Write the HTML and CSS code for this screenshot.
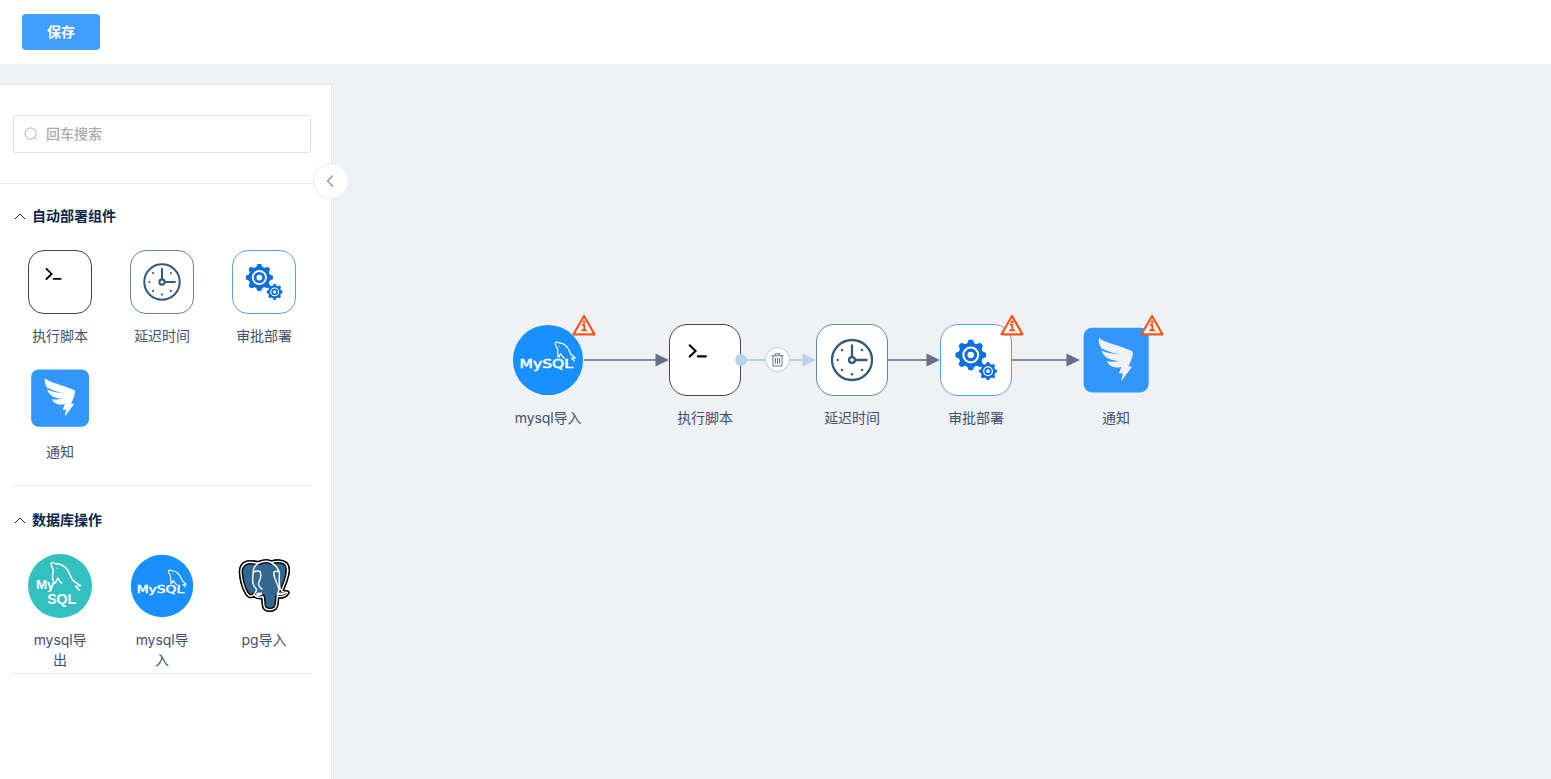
FILE: index.html
```
<!DOCTYPE html>
<html lang="zh-CN">
<head>
<meta charset="utf-8">
<title>流程编排</title>
<link rel="stylesheet" href="styles.css">
</head>
<body>
<svg class="defs" width="0" height="0" aria-hidden="true">
  <symbol id="script" viewBox="0 0 64 64">
    <path d="M18 18.500l5.400 5.200-5.400 5.200M25.500 28.700h7.200" fill="none" stroke="#000" stroke-width="1.900" stroke-linecap="round"/>
  </symbol>
  <symbol id="clock" viewBox="0 0 64 64">
    <g fill="none" stroke="#355a7c" stroke-width="2.100" stroke-linecap="round">
      <circle cx="32" cy="32" r="18.300"/>
      <circle cx="32" cy="32" r="2.700"/>
      <path d="M32 18.600v10.500M35 32h10.300"/>
    </g>
    <g fill="#355a7c">
      <circle cx="19" cy="32" r="1.100"/><circle cx="32" cy="45" r="1.100"/>
      <circle cx="22.800" cy="22.800" r="1.100"/><circle cx="41.200" cy="22.800" r="1.100"/>
      <circle cx="22.800" cy="41.200" r="1.100"/><circle cx="41.200" cy="41.200" r="1.100"/>
    </g>
  </symbol>
  <symbol id="gear" viewBox="-14 -14 28 28">
    <g fill="#0b6fdf">
      <path id="tooth" d="M-4.600-9.300C-2.800-10.500-2.500-12-2-13.400Q0-14.400 2-13.400C2.500-12 2.800-10.500 4.600-9.300z"/>
      <use href="#tooth" transform="rotate(45)"/><use href="#tooth" transform="rotate(90)"/>
      <use href="#tooth" transform="rotate(135)"/><use href="#tooth" transform="rotate(180)"/>
      <use href="#tooth" transform="rotate(225)"/><use href="#tooth" transform="rotate(270)"/>
      <use href="#tooth" transform="rotate(315)"/>
    </g>
    <circle r="9.200" fill="#fff" stroke="#0b6fdf" stroke-width="3.200"/>
    <circle r="4.300" fill="none" stroke="#0b6fdf" stroke-width="2.800"/>
  </symbol>
  <symbol id="gears" viewBox="0 0 64 64">
    <use href="#gear" x="12.900" y="13.100" width="28.600" height="28.600"/>
    <use href="#gear" x="34.600" y="33.800" width="16.800" height="16.800"/>
  </symbol>
  <symbol id="ding" viewBox="0 0 64 64">
    <rect x="3.200" y="3.400" width="57.800" height="57.400" rx="7.500" fill="#3296fa"/>
    <path fill="currentColor" d="M16.900 12.200C21 16.500 37 19.600 45 23.600Q47.800 25 47 27.200C46.400 30.500 44.800 34 43 37.600L46.200 38 36.700 50.800 38 43.800H34.600L36.800 37.900C33 39.200 30 38.600 28.100 37.600 26 36.500 24.500 35 23.900 33.200 27 33.800 31 33.600 34.600 32.800 28 32.800 21.500 30.500 19.100 23.600 24 26 30 26.800 35.500 27.200 28 25.400 22.500 23.500 19.200 21.700 17 19 16.200 15 16.900 12.200z"/>
  </symbol>
  <symbol id="mysql-in" viewBox="0 0 64 64">
    <circle cx="32" cy="32" r="31.200" fill="#1890ff"/>
    <path d="M41 29.500L40.600 24.500C41.500 22 38.500 19.500 38.500 17.500 38.500 15.800 40.200 15.800 41.700 16.800 46.500 16.500 50 21 51.200 24.500 52 27.500 54 28.700 56.300 30.200L53 30.600 55.800 33M41 29.500C41.800 30.600 42.300 27 43.200 26.600 44.300 28.500 45.600 29.500 46.800 31" fill="none" stroke="#fff" stroke-width="1.100" stroke-linejoin="round"/>
    <circle cx="42" cy="19.700" r=".5" fill="#fff"/>
  </symbol>
  <symbol id="mysql-out" viewBox="0 0 64 64">
    <circle cx="32" cy="32" r="32" fill="#33c0c0"/>
    <path d="M26 28C24 25 24.300 21 25.200 17.500 25.700 15 23 12.500 23.100 10 23.200 7.800 26 8.600 27.500 9.800 36 9.500 40.500 16 43 23 44.500 27.500 48.500 28.800 52.600 31.600L47.300 32.200 52 36.700M26 28C27.500 31.500 28.500 26 29.800 24 31 27 32.300 28.400 34.200 29.500" fill="none" stroke="#fff" stroke-width="1.500" stroke-linejoin="round"/>
    <circle cx="29" cy="14" r=".6" fill="#fff"/>
  </symbol>
  <symbol id="pg" viewBox="0 0 64 64">
    <path id="elephant" d="M14 9C18 7 24 9.500 27 9 31 7 36 7 39 8.500 44 7 50 7 53.500 9.500 58 14 55 22 53.500 27 52.500 30.500 50.500 33.500 49.500 37 51.500 38.500 53.500 38.500 55.500 38.500 54 41.500 50 43 45.200 42.500 45 48 45 51.500 43 54 40.500 56.500 34.500 56.500 32.500 53.500 31 50 32 47 31 42.800 28 43.500 24 43.500 22 40.500 19.500 43 17.500 43 15 39.500 11 33 9.500 25 9 19.500 8.500 15 10 11 14 9z" fill="#336791" stroke="#000" stroke-width="4.200" stroke-linejoin="round"/>
    <use href="#elephant" class="elephant-rim"/>
    <path d="M14 9C18 7 24 9.500 27 9 31 7 36 7 39 8.500 44 7 50 7 53.500 9.500 58 14 55 22 53.500 27 52.500 30.500 50.500 33.500 49.500 37 51.500 38.500 53.500 38.500 55.500 38.500 54 41.500 50 43 45.200 42.500 45 48 45 51.500 43 54 40.500 56.500 34.500 56.500 32.500 53.500 31 50 32 47 31 42.800 28 43.500 24 43.500 22 40.500 19.500 43 17.500 43 15 39.500 11 33 9.500 25 9 19.500 8.500 15 10 11 14 9zM27 9C21.500 11.500 21 16 21 21 20.500 26 19.800 30.500 24 34.500 26 36.500 23 38.500 22 40.500M21 18.500Q24.500 16 28 17.500C30.500 22 27.500 26 26.300 30Q27.500 33.500 30.500 35.500M39 8.500C44 11 46.500 15 47.500 19.500 47 27 46.500 31 48.500 36M47 18Q44.500 16.500 41.800 18C41.500 24 45.500 29 47 35L45.200 42.500" fill="none" stroke="#fff" stroke-width="1.400" stroke-linejoin="round"/>
    <path d="M24 39.500Q26.500 38 30 38.500L29.500 41.500 24.500 42zM46 39Q50 38 54 39.500 50.500 41.500 46 41.300z" fill="#fff"/>
  </symbol>
  <symbol id="warn" viewBox="0 0 24 22">
    <path d="M12 2L22.500 20.300H1.500z" fill="#fff" stroke="#fa541c" stroke-width="2.200" stroke-linejoin="round"/>
    <path d="M9.800 10.800h2.500v5.200M9.200 16.200h5.800" fill="none" stroke="#fa541c" stroke-width="1.900"/>
    <rect x="10.900" y="6.700" width="2.500" height="2.400" fill="#fa541c"/>
  </symbol>
</svg>

<header class="toolbar"><button class="save">保存</button></header>

<main class="workspace">
  <aside class="sidebar">
    <div class="search-area">
      <label class="search">
        <svg width="14" height="14" viewBox="0 0 14 14" fill="none" stroke="#a8abb2"><circle cx="6.700" cy="6.500" r="5.600"/><path d="M10.600 10.600l2 1.700"/></svg>
        <input type="text" placeholder="回车搜索">
      </label>
    </div>
    <button class="collapse"><svg width="10" height="14" viewBox="0 0 10 14"><path d="M7 1.500L1.500 7 7 12.500" fill="none" stroke="#8c929c" stroke-width="1.200"/></svg></button>

    <section class="group">
      <h3><svg width="12" height="8" viewBox="0 0 12 8"><path d="M1 7L6 2l5 5" fill="none" stroke="#0c2647"/></svg>自动部署组件</h3>
      <div class="grid">
        <div class="item"><svg class="icon box dark"><use href="#script"/></svg><span>执行脚本</span></div>
        <div class="item"><svg class="icon box slate"><use href="#clock"/></svg><span>延迟时间</span></div>
        <div class="item"><svg class="icon box blue"><use href="#gears"/></svg><span>审批部署</span></div>
        <div class="item"><svg class="icon"><use href="#ding"/></svg><span>通知</span></div>
      </div>
    </section>
    <section class="group last">
      <h3><svg width="12" height="8" viewBox="0 0 12 8"><path d="M1 7L6 2l5 5" fill="none" stroke="#0c2647"/></svg>数据库操作</h3>
      <div class="grid">
        <div class="item">
          <svg class="icon" viewBox="0 0 64 64">
            <use href="#mysql-out" width="64" height="64"/>
            <text class="caption" x="8" y="34.700" font-size="12.500" textLength="18.500" lengthAdjust="spacingAndGlyphs">My</text>
            <text class="caption" x="19.200" y="49.700" font-size="14" textLength="29" lengthAdjust="spacingAndGlyphs">SQL</text>
          </svg>
          <span>mysql导<br>出</span>
        </div>
        <div class="item">
          <svg class="icon" viewBox="0 0 64 64">
            <use href="#mysql-in" width="64" height="64"/>
            <text class="wordmark" x="6.700" y="39.300" font-size="10.500" textLength="47.500" lengthAdjust="spacingAndGlyphs">MySQL</text>
          </svg>
          <span>mysql导<br>入</span>
        </div>
        <div class="item"><svg class="icon"><use href="#pg"/></svg><span>pg导入</span></div>
      </div>
    </section>
  </aside>

  <div class="canvas">
    <svg class="edges" width="1219" height="715" viewBox="332 64 1219 715">
      <g stroke="#868ca1" stroke-width="2">
        <path d="M584 360h72M888 360h39M1012 360h55"/>
        <path d="M741 360h62" stroke="#b8d0ea"/>
      </g>
      <g fill="#667087">
        <path d="M655.500 353.500v13l13.500-6.500zM926.500 353.500v13l13.500-6.500zM1066.500 353.500v13l13.500-6.500z"/>
        <path d="M802.500 353.500v13l13.500-6.500z" fill="#b8d0ea"/>
      </g>
    </svg>
    <div class="node n1">
      <svg class="icon" viewBox="0 0 64 64">
        <use href="#mysql-in" width="64" height="64"/>
        <text class="wordmark" x="6.700" y="39.300" font-size="10.500" textLength="47.500" lengthAdjust="spacingAndGlyphs">MySQL</text>
      </svg>
      <svg class="warn"><use href="#warn"/></svg><span>mysql导入</span>
    </div>
    <div class="node n2"><svg class="icon box dark"><use href="#script"/></svg><i class="port"></i><span>执行脚本</span></div>
    <div class="node n3"><svg class="icon box slate"><use href="#clock"/></svg><span>延迟时间</span></div>
    <div class="node n4"><svg class="icon box blue"><use href="#gears"/></svg><svg class="warn"><use href="#warn"/></svg><span>审批部署</span></div>
    <div class="node n5"><svg class="icon"><use href="#ding"/></svg><svg class="warn"><use href="#warn"/></svg><span>通知</span></div>
    <button class="remove"><svg width="13" height="14" viewBox="0 0 13 14" fill="none" stroke="#6b7180"><path d="M.5 2.800h12M4 2.600V.8h5v1.800M2 3v10h9V3M4.500 5v5.500M6.500 5v5.500M8.500 5v5.500"/></svg></button>
  </div>
</main>
</body>
</html>
```
FILE: styles.css
```
* { box-sizing: border-box; }
body {
  margin: 0;
  height: 779px;
  overflow: hidden;
  display: flex;
  flex-direction: column;
  background: #f0f1f5;
  color: #3f4f70;
  font: 14px/20px Inter, "Noto Sans CJK SC", sans-serif;
}
button { padding: 0; border: 0; font: inherit; }
svg { flex: none; display: block; }
.defs { position: absolute; }

.toolbar {
  flex: none;
  height: 64px;
  padding: 14px 22px;
  background: #fff;
}
.save {
  width: 78px;
  height: 36px;
  border-radius: 4px;
  background: #409eff;
  color: #fff;
  font-weight: 700;
}

.workspace { flex: 1; display: flex; min-height: 0; }
.sidebar {
  position: relative;
  flex: none;
  width: 332px;
  margin-top: 20px;
  border: solid #e3e6f0;
  border-width: 1px 1px 0 0;
  background: #fff;
}
.search-area {
  height: 99px;
  padding: 30px 20px 0 13px;
  border-bottom: 1px solid #e8eaf3;
}
.search {
  display: flex;
  align-items: center;
  gap: 8px;
  height: 38px;
  padding: 0 10px;
  border: 1px solid #dcdde4;
  border-radius: 3px;
}
.search input {
  flex: 1;
  min-width: 0;
  padding: 0;
  border: 0;
  outline: 0;
  font: inherit;
  font-weight: 500;
}
.search input::placeholder { color: #a8abb2; opacity: 1; }
.collapse {
  position: absolute;
  z-index: 2;
  top: 78px;
  right: -18px;
  width: 36px;
  height: 36px;
  display: grid;
  place-items: center;
  border: 1px solid #ebecf5;
  border-radius: 50%;
  background: #fff;
}

.group {
  width: 299px;
  height: 302px;
  margin-left: 13px;
  border-bottom: 1px solid #e8eaf3;
}
.group.last { height: 188px; }
.group h3 {
  display: flex;
  align-items: center;
  gap: 6px;
  margin: 0;
  padding: 22px 0 24px 1px;
  color: #0c2647;
  font-size: 14px;
  font-weight: 700;
}
.group.last h3 { padding-top: 24px; }
.grid {
  display: grid;
  grid-template-columns: repeat(3, 64px);
  gap: 20px 38px;
  padding-left: 15px;
}
.item, .node {
  display: flex;
  flex-direction: column;
  align-items: center;
  gap: 12px;
  text-align: center;
  letter-spacing: -0.1px;
  white-space: nowrap;
}
.icon { width: 64px; height: 64px; color: #fff; letter-spacing: 0; }
.box { border-radius: 16px; background: #fff; border: 1px solid; }
.dark { border-color: #444; }
.slate { border-color: #6785a3; }
.blue { border-color: #5c9fe9; }
.elephant-rim { stroke-width: 0; }
.wordmark { font-family: "DejaVu Sans", sans-serif; font-weight: 400; fill: #fff; stroke: #fff; stroke-width: .45px; }
.caption { font-family: "Liberation Sans", sans-serif; font-weight: 700; fill: #fff; }

.canvas { position: relative; flex: 1; }
.edges { position: absolute; inset: 0; }
.node { position: absolute; top: 260px; width: 72px; }
.node .icon { width: 72px; height: 72px; color: #f0f1f5; }
.node .box { border-radius: 18px; }
.n1 { left: 180px; }
.n2 { left: 337px; }
.n3 { left: 484px; }
.n4 { left: 608px; }
.n5 { left: 748px; }
.node .warn { position: absolute; top: -10px; left: 59.5px; width: 24px; height: 22px; }
.port {
  position: absolute;
  top: 30px;
  right: -6px;
  width: 12px;
  height: 12px;
  border-radius: 50%;
  background: #b8d0ea;
}
.remove {
  position: absolute;
  left: 433px;
  top: 283px;
  width: 25px;
  height: 25px;
  display: grid;
  place-items: center;
  border: 1px solid #c3c8d2;
  border-radius: 50%;
  background: #fff;
}
```
